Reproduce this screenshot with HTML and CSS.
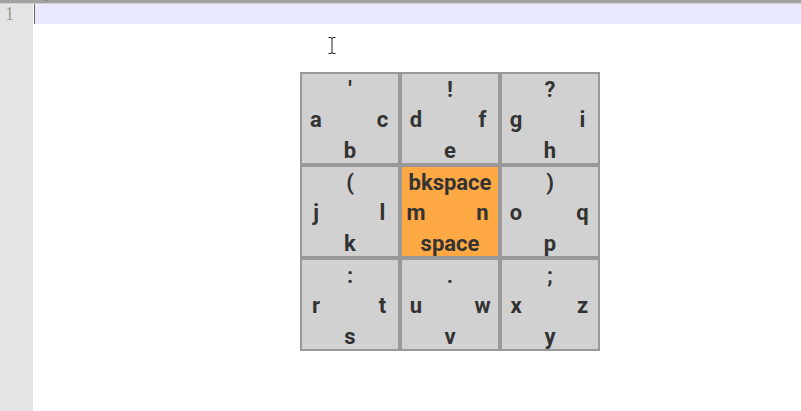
FILE: index.html
```html
<!DOCTYPE html>
<html>
<head>
<meta charset="utf-8">
<link rel="stylesheet" href="styles.css">
</head>
<body>
<div class="topbar"><span class="tick"></span></div>
<div class="editor">
  <div class="gutter"><div class="lineno">1</div></div>
  <div class="caret"></div>
  <div class="content">
    <div class="curline"></div>
    <div class="pad">
      <div class="cell"><div class="t">'</div><div class="l">a</div><div class="r">c</div><div class="b">b</div></div>
      <div class="cell"><div class="t">!</div><div class="l">d</div><div class="r">f</div><div class="b">e</div></div>
      <div class="cell"><div class="t">?</div><div class="l">g</div><div class="r">i</div><div class="b">h</div></div>
      <div class="cell"><div class="t">(</div><div class="l">j</div><div class="r">l</div><div class="b">k</div></div>
      <div class="cell active"><div class="t">bkspace</div><div class="l">m</div><div class="r">n</div><div class="b">space</div></div>
      <div class="cell"><div class="t">)</div><div class="l">o</div><div class="r">q</div><div class="b">p</div></div>
      <div class="cell"><div class="t">:</div><div class="l">r</div><div class="r">t</div><div class="b">s</div></div>
      <div class="cell"><div class="t">.</div><div class="l">u</div><div class="r">w</div><div class="b">v</div></div>
      <div class="cell"><div class="t">;</div><div class="l">x</div><div class="r">z</div><div class="b">y</div></div>
    </div>
  </div>
</div>
<svg class="ibeam" width="8" height="17" viewBox="0 0 8 17">
  <path d="M0.5 0.5 H3 M5 0.5 H7.5 M4 1 V16 M0.5 16.5 H3 M5 16.5 H7.5 M3 1 H5 M3 16 H5" stroke="#222" stroke-width="1" fill="none"/>
</svg>
</body>
</html>
```
FILE: styles.css
```css
html, body {
  margin: 0;
  padding: 0;
  background: #fff;
  height: 100%;
  overflow: hidden;
}
body {
  position: relative;
  font-family: Roboto, "Liberation Sans", sans-serif;
}
.topbar {
  height: 3px;
  background: #a2a2a2;
  border-bottom: 1px solid #d0d0d0;
  position: relative;
}
.tick {
  position: absolute;
  left: 46px;
  top: 0;
  width: 1px;
  height: 1px;
  background: #555;
}
.editor {
  display: flex;
  height: calc(100% - 4px);
}
.gutter {
  width: 33px;
  flex: none;
  background: #e4e4e4;
}
.lineno {
  font-family: "Liberation Serif", serif;
  font-size: 18px;
  line-height: 20px;
  color: #9a9a9a;
  padding-left: 5px;
}
.caret {
  width: 1px;
  height: 20px;
  background: #666;
  flex: none;
  margin-left: 1px;
}
.content {
  flex: 1;
}
.curline {
  height: 20px;
  background: #e8e8ff;
}
.pad {
  margin: 48px 0 0 265px;
  display: grid;
  grid-template-columns: repeat(3, 100px);
  width: 300px;
}
.cell {
  box-sizing: border-box;
  width: 100px;
  height: 93px;
  border: 2px solid #999;
  background: #d1d1d1;
  color: #333;
  font-weight: 700;
  font-size: 22px;
  display: grid;
  grid-template-columns: 28px 1fr 31px;
  grid-template-rows: 30px 31px 24px;
  padding-top: 4px;
  align-items: start;
  text-align: center;
  line-height: 24px;
}
.cell.active {
  background: #ffa944;
}
.t { grid-column: 1 / 4; grid-row: 1; }
.l { grid-column: 1; grid-row: 2; }
.r { grid-column: 3; grid-row: 2; }
.b { grid-column: 1 / 4; grid-row: 3; }
.ibeam {
  position: absolute;
  left: 328px;
  top: 37px;
}
```
